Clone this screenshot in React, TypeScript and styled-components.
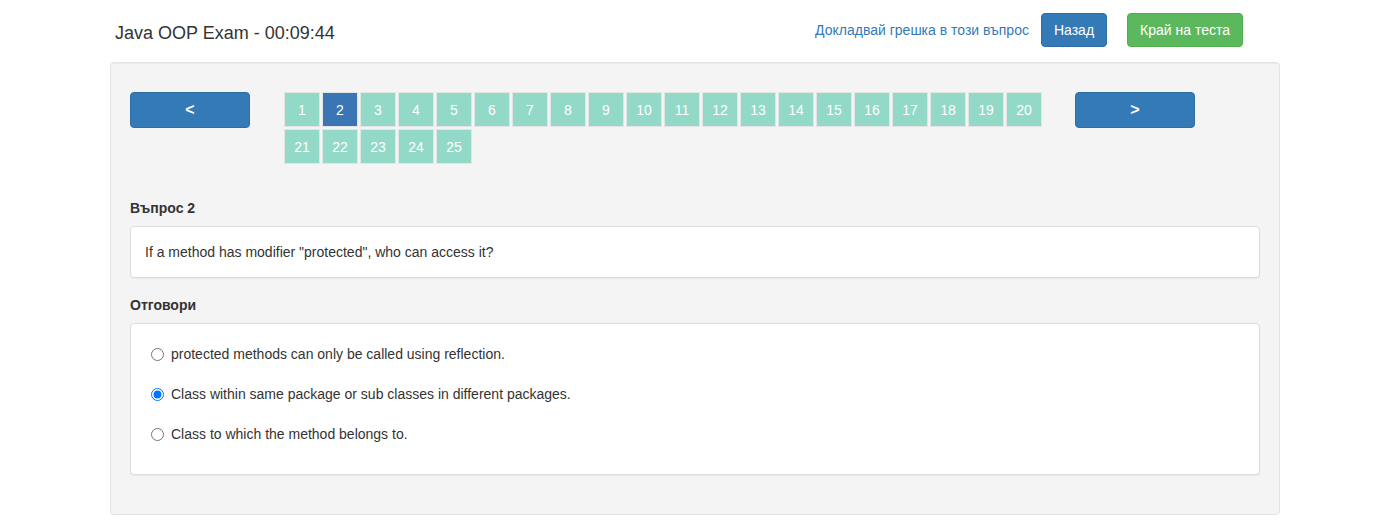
import React, { useState } from "react";
import styled, { createGlobalStyle } from "styled-components";

const GlobalStyle = createGlobalStyle`
  html, body { margin: 0; padding: 0; background: #fff; }
  body {
    font-family: "Liberation Sans", Arial, Helvetica, sans-serif;
    font-size: 14px;
    line-height: 20px;
    color: #333;
  }
  * { box-sizing: border-box; }
`;

const Page = styled.div`
  width: 1170px;
  margin-left: 110px;
`;

const Header = styled.header`
  display: flex;
  justify-content: space-between;
  align-items: flex-start;
  padding: 13px 37px 0 5px;
  height: 62px;
`;

const Title = styled.h1`
  margin: 0;
  padding-top: 9px;
  font-size: 18px;
  font-weight: normal;
  line-height: 22px;
  color: #333;
`;

const Actions = styled.div`
  display: flex;
  align-items: center;
`;

const ReportLink = styled.a`
  color: #337ab7;
  text-decoration: none;
  font-size: 14px;
  margin-right: 12px;
  cursor: pointer;
`;

const Btn = styled.button<{ $variant: "primary" | "success"; $gap?: number }>`
  height: 34px;
  padding: 6px 12px;
  font-family: inherit;
  font-size: 14px;
  line-height: 20px;
  border-radius: 4px;
  color: #fff;
  cursor: pointer;
  margin-left: ${(p) => p.$gap ?? 0}px;
  background: ${(p) => (p.$variant === "primary" ? "#337ab7" : "#5cb85c")};
  border: 1px solid ${(p) => (p.$variant === "primary" ? "#2e6da4" : "#4cae4c")};
`;

const Well = styled.section`
  background: #f4f4f4;
  border: 1px solid #e3e3e3;
  border-radius: 4px;
  box-shadow: inset 0 1px 1px rgba(0, 0, 0, 0.05);
  padding: 29px 19px 39px;
  min-height: 453px;
`;

const NavRow = styled.div`
  display: flex;
  align-items: flex-start;
`;

const ArrowBtn = styled.button`
  width: 120px;
  height: 36px;
  flex: none;
  background: #337ab7;
  border: 1px solid #2e6da4;
  border-radius: 4px;
  color: #fff;
  font-family: inherit;
  font-size: 16px;
  font-weight: bold;
  cursor: pointer;
`;

const Pages = styled.div`
  width: 791px;
  margin-left: 34px;
  display: flex;
  flex-wrap: wrap;
  column-gap: 2px;
  row-gap: 2px;
`;

const PageBox = styled.a<{ $active?: boolean }>`
  width: 36px;
  height: 35px;
  display: flex;
  align-items: center;
  justify-content: center;
  border: 1px solid #e4e4e4;
  background: ${(p) => (p.$active ? "#3a76b4" : "#92d9c8")};
  color: #fff;
  font-size: 14px;
  text-decoration: none;
  cursor: pointer;
`;

const Label = styled.div<{ $top: number }>`
  font-weight: bold;
  margin-top: ${(p) => p.$top}px;
  margin-bottom: 8px;
  line-height: 20px;
`;

const Panel = styled.div`
  background: #fff;
  border: 1px solid #ddd;
  border-radius: 4px;
  box-shadow: 0 1px 1px rgba(0, 0, 0, 0.05);
`;

const QuestionBody = styled.div`
  padding: 15px 14px 15px 14px;
`;

const AnswerList = styled.div`
  display: flex;
  flex-direction: column;
  gap: 20px;
  padding: 20px 20px 30px;
`;

const AnswerLine = styled.label`
  display: flex;
  align-items: center;
  gap: 7px;
  height: 20px;
  cursor: pointer;
`;

const Radio = styled.input`
  width: 13px;
  height: 13px;
  margin: 0;
`;

const answers = [
  "protected methods can only be called using reflection.",
  "Class within same package or sub classes in different packages.",
  "Class to which the method belongs to.",
];

export default function App() {
  const [selected, setSelected] = useState(1);
  const pages = Array.from({ length: 25 }, (_, i) => i + 1);
  return (
    <>
      <GlobalStyle />
      <Page>
        <Header>
          <Title>Java OOP Exam - 00:09:44</Title>
          <Actions>
            <ReportLink>Докладвай грешка в този въпрос</ReportLink>
            <Btn $variant="primary">Назад</Btn>
            <Btn $variant="success" $gap={20}>
              Край на теста
            </Btn>
          </Actions>
        </Header>
        <Well>
          <NavRow>
            <ArrowBtn>&lt;</ArrowBtn>
            <Pages>
              {pages.map((n) => (
                <PageBox key={n} $active={n === 2}>
                  {n}
                </PageBox>
              ))}
            </Pages>
            <ArrowBtn>&gt;</ArrowBtn>
          </NavRow>
          <Label $top={34}>Въпрос 2</Label>
          <Panel>
            <QuestionBody>
              If a method has modifier "protected", who can access it?
            </QuestionBody>
          </Panel>
          <Label $top={17}>Отговори</Label>
          <Panel>
            <AnswerList>
              {answers.map((a, i) => (
                <AnswerLine key={i}>
                  <Radio
                    type="radio"
                    name="answer"
                    checked={selected === i}
                    onChange={() => setSelected(i)}
                  />
                  {a}
                </AnswerLine>
              ))}
            </AnswerList>
          </Panel>
        </Well>
      </Page>
    </>
  );
}
